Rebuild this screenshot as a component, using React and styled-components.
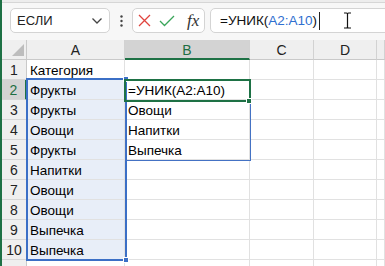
import React from 'react';
import styled, { createGlobalStyle } from 'styled-components';

const GlobalStyle = createGlobalStyle`
  html, body {
    margin: 0;
    padding: 0;
    background: #fff;
  }
  body {
    font-family: "Liberation Sans", Arial, sans-serif;
  }
`;

const Window = styled.div`
  width: 385px;
  height: 266px;
  overflow: hidden;
  box-sizing: border-box;
  border-left: 2px solid #1e7145;
  display: flex;
  flex-direction: column;
  background: #fff;
`;

const TopEdge = styled.div`
  height: 2px;
  background: #ededed;
  border-bottom: 1px solid #d6d6d6;
  flex-shrink: 0;
`;

const Toolbar = styled.div`
  height: 37px;
  box-sizing: border-box;
  padding: 5px 0 0 8px;
  display: flex;
  align-items: flex-start;
  background: #f7f7f7;
  flex-shrink: 0;
`;

const Box = styled.div`
  height: 25px;
  box-sizing: border-box;
  background: #fff;
  border: 1px solid #d4d4d4;
  border-radius: 5px;
  display: flex;
  align-items: center;
`;

const NameBox = styled(Box)`
  width: 100px;
  padding: 0 6px 0 6px;
  justify-content: space-between;
  font-size: 13px;
  color: #222;
`;

const Dots = styled.div`
  width: 22px;
  height: 25px;
  display: flex;
  align-items: center;
  justify-content: center;
`;

const IconBox = styled(Box)`
  width: 73px;
  padding-left: 5px;
  gap: 8px;
`;

const Fx = styled.span`
  font-family: "Liberation Serif", "Times New Roman", serif;
  font-style: italic;
  font-size: 17px;
  color: #333;
  margin-left: 4px;
  line-height: 1;
`;

const FormulaBox = styled(Box)`
  flex: 1;
  margin-left: 5px;
  margin-right: -12px;
  padding-left: 9px;
  font-size: 13.5px;
  color: #111;
  position: relative;
`;

const Ref = styled.span`
  color: #2f6fd0;
`;

const Caret = styled.span`
  display: inline-block;
  width: 1px;
  height: 18px;
  background: #222;
  margin-left: 2px;
`;

const IBeam = styled.svg`
  position: absolute;
  left: 132px;
  top: 3px;
`;

const Sheet = styled.div`
  position: relative;
  display: grid;
  grid-template-columns: 25px 98px 125px 64px 63px 1fr;
  grid-auto-rows: 20px;
`;

const Corner = styled.div`
  background: #efefef;
  border-right: 1px solid #c9c9c9;
  border-bottom: 1px solid #c9c9c9;
  box-sizing: border-box;
  display: flex;
  align-items: flex-end;
  justify-content: flex-end;
  padding: 0 2px 3px 0;
`;

const ColHead = styled.div`
  background: ${p => (p.$active ? '#d3d3d3' : '#efefef')};
  color: ${p => (p.$active ? '#1e6e42' : '#222')};
  border-right: 1px solid #d2d2d2;
  border-bottom: ${p => (p.$active ? '2px solid #1e7145' : '1px solid #c9c9c9')};
  box-sizing: border-box;
  font-size: 14px;
  display: flex;
  align-items: center;
  justify-content: center;
  padding-top: ${p => (p.$active ? '1px' : '0')};
`;

const RowHead = styled.div`
  background: ${p => (p.$active ? '#d3d3d3' : '#efefef')};
  color: ${p => (p.$active ? '#1e6e42' : '#222')};
  border-right: ${p => (p.$active ? '2px solid #1e7145' : '1px solid #c9c9c9')};
  border-bottom: 1px solid #d6d6d6;
  box-sizing: border-box;
  font-size: 14px;
  display: flex;
  align-items: center;
  justify-content: center;
  padding-top: 1px;
`;

const Cell = styled.div`
  background: ${p => (p.$selected ? '#e8eef8' : '#fff')};
  border-right: 1px solid #e1e1e1;
  border-bottom: 1px solid #e1e1e1;
  box-sizing: border-box;
  font-size: 13.5px;
  color: #000;
  padding: 2px 0 0 3px;
  line-height: 18px;
  white-space: nowrap;
  overflow: visible;
`;

const Frame = styled.div`
  position: absolute;
  box-sizing: border-box;
  left: ${p => p.$x}px;
  top: ${p => p.$y}px;
  width: ${p => p.$w}px;
  height: ${p => p.$h}px;
  border: ${p => p.$b}px solid ${p => p.$color};
  pointer-events: none;
`;

const Handle = styled.div`
  position: absolute;
  left: ${p => p.$x}px;
  top: ${p => p.$y}px;
  width: 6px;
  height: 6px;
  box-sizing: border-box;
  background: ${p => p.$color};
  border: 1px solid #fff;
`;

const cols = ['A', 'B', 'C', 'D', 'E'];
const colA = ['Категория', 'Фрукты', 'Фрукты', 'Овощи', 'Фрукты', 'Напитки', 'Овощи', 'Овощи', 'Выпечка', 'Выпечка', ''];
const colB = ['', '=УНИК(A2:A10)', 'Овощи', 'Напитки', 'Выпечка', '', '', '', '', '', ''];

export default function App() {
  return (
    <>
      <GlobalStyle />
      <Window>
        <TopEdge />
        <Toolbar>
          <NameBox>
            <span>ЕСЛИ</span>
            <svg width="12" height="8" viewBox="0 0 12 8">
              <path d="M1.5 1.5 L6 6 L10.5 1.5" fill="none" stroke="#444" strokeWidth="1.3" />
            </svg>
          </NameBox>
          <Dots>
            <svg width="3" height="12" viewBox="0 0 3 12">
              <circle cx="1.5" cy="1.5" r="1.2" fill="#444" />
              <circle cx="1.5" cy="6" r="1.2" fill="#444" />
              <circle cx="1.5" cy="10.5" r="1.2" fill="#444" />
            </svg>
          </Dots>
          <IconBox>
            <svg width="13" height="13" viewBox="0 0 13 13">
              <path d="M1 1 L12 12 M12 1 L1 12" stroke="#e0443e" strokeWidth="1.3" fill="none" />
            </svg>
            <svg width="16" height="12" viewBox="0 0 16 12">
              <path d="M1 6 L5.5 10.5 L15 1" stroke="#3aa55a" strokeWidth="1.3" fill="none" />
            </svg>
            <Fx>fx</Fx>
          </IconBox>
          <FormulaBox>
            <span>=УНИК(</span>
            <Ref>A2:A10</Ref>
            <span>)</span>
            <Caret />
            <IBeam width="9" height="17" viewBox="0 0 9 17">
              <path d="M1 1 H3.5 Q4.5 1 4.5 2 V15 Q4.5 16 3.5 16 H1 M8 1 H5.5 Q4.5 1 4.5 2 M4.5 15 Q4.5 16 5.5 16 H8" stroke="#111" strokeWidth="1.2" fill="none" />
            </IBeam>
          </FormulaBox>
        </Toolbar>
        <Sheet>
          <Corner>
            <svg width="12" height="12" viewBox="0 0 12 12">
              <path d="M12 0 L12 12 L0 12 Z" fill="#bdbdbd" />
            </svg>
          </Corner>
          {cols.map(c => (
            <ColHead key={c} $active={c === 'B'}>{c === 'E' ? '' : c}</ColHead>
          ))}
          {colA.map((a, i) => (
            <React.Fragment key={i}>
              <RowHead $active={i === 1}>{i < 10 ? i + 1 : ''}</RowHead>
              <Cell $selected={i >= 1 && i <= 9}>{a}</Cell>
              <Cell>{colB[i]}</Cell>
              <Cell />
              <Cell />
              <Cell />
            </React.Fragment>
          ))}
          <Frame $x={24} $y={38} $w={101} $h={183} $b={2} $color="#3b6fc6" />
          <Handle $x={121} $y={36} $color="#3b6fc6" />
          <Handle $x={121} $y={217} $color="#3b6fc6" />
          <Frame $x={123} $y={40} $w={126} $h={81} $b={1} $color="#4472c4" />
          <Frame $x={122} $y={39} $w={127} $h={23} $b={2} $color="#1e7145" />
          <Handle $x={244} $y={58} $color="#1e7145" />
        </Sheet>
      </Window>
    </>
  );
}
